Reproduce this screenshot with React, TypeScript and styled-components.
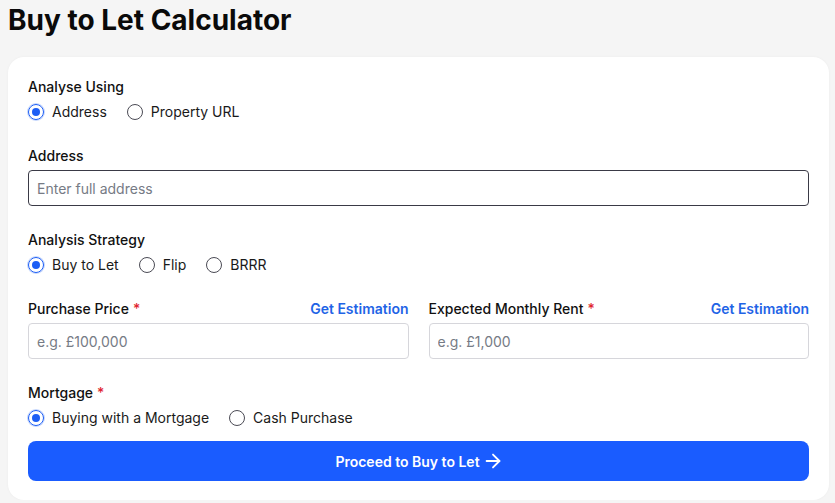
import { useState } from "react";
import styled, { createGlobalStyle } from "styled-components";
import { ArrowRight } from "lucide-react";

const GlobalStyle = createGlobalStyle`
  html, body {
    margin: 0;
    padding: 0;
    background: #f5f5f5;
  }
  body {
    font-family: Inter, "Noto Sans", "Liberation Sans", sans-serif;
    color: #111111;
    -webkit-font-smoothing: antialiased;
  }
`;

const Page = styled.div`
  padding: 0 6px 0 8px;
`;

const Title = styled.h1`
  margin: 0;
  padding-top: 3px;
  font-size: 28px;
  line-height: 34px;
  font-weight: 700;
  color: #0a0a0a;
`;

const Card = styled.form`
  margin-top: 20px;
  background: #ffffff;
  border-radius: 16px;
  box-shadow: 0 0 3px rgba(0, 0, 0, 0.04);
  padding: 20px 20px 19px;
  display: flex;
  flex-direction: column;
  gap: 24px;
`;

const Section = styled.div`
  display: flex;
  flex-direction: column;
  gap: 4px;
`;

const LabelRow = styled.div`
  display: flex;
  justify-content: space-between;
  align-items: center;
`;

const Label = styled.label`
  font-size: 14px;
  line-height: 20px;
  font-weight: 500;
  color: #111111;
`;

const Required = styled.span`
  color: #e0242f;
  margin-left: 4px;
`;

const LinkButton = styled.button`
  border: none;
  background: none;
  padding: 0;
  font-family: inherit;
  font-size: 14px;
  line-height: 20px;
  font-weight: 600;
  color: #1f64e6;
  cursor: pointer;
`;

const RadioGroup = styled.div`
  display: flex;
  align-items: center;
  gap: 20px;
  height: 21px;
`;

const RadioOption = styled.label`
  display: flex;
  align-items: center;
  gap: 8px;
  font-size: 14px;
  line-height: 20px;
  color: #1a1a1a;
  cursor: pointer;
`;

const RadioDot = styled.span<{ checked: boolean }>`
  box-sizing: border-box;
  width: 16px;
  height: 16px;
  border-radius: 50%;
  border: 1px solid ${(p) => (p.checked ? "#1d5ef5" : "#4b4b55")};
  display: flex;
  align-items: center;
  justify-content: center;
  box-shadow: ${(p) => (p.checked ? "0 0 0 1px rgba(29, 94, 245, 0.25)" : "none")};
  &::after {
    content: "";
    width: 8px;
    height: 8px;
    border-radius: 50%;
    background: ${(p) => (p.checked ? "#1d5ef5" : "transparent")};
  }
`;

const HiddenInput = styled.input`
  display: none;
`;

const TextInput = styled.input<{ focused?: boolean }>`
  box-sizing: border-box;
  width: 100%;
  height: 36px;
  padding: 0 8px;
  border-radius: 4px;
  border: 1px solid ${(p) => (p.focused ? "#3a3a46" : "#d6d6db")};
  font-family: inherit;
  font-size: 14px;
  color: #111;
  background: #fff;
  outline: none;
  &::placeholder {
    color: #767b85;
  }
`;

const Columns = styled.div`
  display: grid;
  grid-template-columns: 1fr 1fr;
  gap: 20px;
`;

const Submit = styled.button`
  margin-top: -11px;
  height: 40px;
  border: none;
  border-radius: 8px;
  background: #1a5cff;
  color: #ffffff;
  font-family: inherit;
  font-size: 14px;
  font-weight: 600;
  display: flex;
  align-items: center;
  justify-content: center;
  gap: 2px;
  padding-left: 8px;
  cursor: pointer;
`;

type Option = { value: string; label: string };

const Radios = ({
  name,
  options,
  value,
  onChange,
}: {
  name: string;
  options: Option[];
  value: string;
  onChange: (v: string) => void;
}) => (
  <RadioGroup>
    {options.map((o) => (
      <RadioOption key={o.value}>
        <HiddenInput
          type="radio"
          name={name}
          checked={value === o.value}
          onChange={() => onChange(o.value)}
        />
        <RadioDot checked={value === o.value} />
        {o.label}
      </RadioOption>
    ))}
  </RadioGroup>
);

const App = () => {
  const [source, setSource] = useState("address");
  const [strategy, setStrategy] = useState("btl");
  const [mortgage, setMortgage] = useState("mortgage");

  return (
    <Page>
      <GlobalStyle />
      <Title>Buy to Let Calculator</Title>
      <Card onSubmit={(e) => e.preventDefault()}>
        <Section>
          <Label>Analyse Using</Label>
          <Radios
            name="source"
            value={source}
            onChange={setSource}
            options={[
              { value: "address", label: "Address" },
              { value: "url", label: "Property URL" },
            ]}
          />
        </Section>

        <Section>
          <Label>Address</Label>
          <TextInput focused placeholder="Enter full address" />
        </Section>

        <Section>
          <Label>Analysis Strategy</Label>
          <Radios
            name="strategy"
            value={strategy}
            onChange={setStrategy}
            options={[
              { value: "btl", label: "Buy to Let" },
              { value: "flip", label: "Flip" },
              { value: "brrr", label: "BRRR" },
            ]}
          />
        </Section>

        <Columns>
          <Section>
            <LabelRow>
              <Label>
                Purchase Price<Required>*</Required>
              </Label>
              <LinkButton type="button">Get Estimation</LinkButton>
            </LabelRow>
            <TextInput placeholder="e.g. £100,000" />
          </Section>
          <Section>
            <LabelRow>
              <Label>
                Expected Monthly Rent<Required>*</Required>
              </Label>
              <LinkButton type="button">Get Estimation</LinkButton>
            </LabelRow>
            <TextInput placeholder="e.g. £1,000" />
          </Section>
        </Columns>

        <Section>
          <Label>
            Mortgage<Required>*</Required>
          </Label>
          <Radios
            name="mortgage"
            value={mortgage}
            onChange={setMortgage}
            options={[
              { value: "mortgage", label: "Buying with a Mortgage" },
              { value: "cash", label: "Cash Purchase" },
            ]}
          />
        </Section>

        <Submit type="submit">
          Proceed to Buy to Let
          <ArrowRight size={22} strokeWidth={2} />
        </Submit>
      </Card>
    </Page>
  );
};

export default App;
